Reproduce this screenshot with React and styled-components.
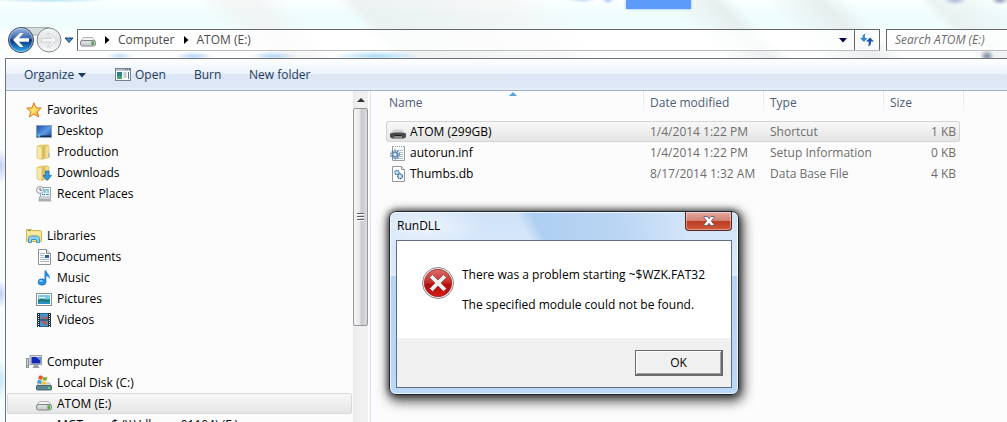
import React from "react";
import styled, { createGlobalStyle } from "styled-components";

const GlobalStyle = createGlobalStyle`
  * {
    box-sizing: border-box;
  }
  body {
    margin: 0;
    font-family: "Open Sans", "Noto Sans", sans-serif;
    font-size: 12px;
    line-height: 16px;
    color: #000;
  }
  button, input {
    font: inherit;
    color: inherit;
    margin: 0;
  }
  svg {
    display: block;
    flex: none;
  }
`;

// Icons

const BackIcon = () => (
  <svg width="56" height="28" viewBox="0 0 56 28">
    <defs>
      <linearGradient id="back" x1="0" y1="0" x2="0" y2="1">
        <stop offset="0" stopColor="#9db8dd" />
        <stop offset=".45" stopColor="#3563ad" />
        <stop offset=".5" stopColor="#0b2f7c" />
        <stop offset="1" stopColor="#2fb4f2" />
      </linearGradient>
      <linearGradient id="fwd" x1="0" y1="0" x2="0" y2="1">
        <stop offset="0" stopColor="#f6f7f7" />
        <stop offset=".5" stopColor="#dfe2e3" />
        <stop offset="1" stopColor="#fbfcfc" />
      </linearGradient>
    </defs>
    <path d="M14 1.500h28L36 9H22z" fill="#d5dcdc" stroke="#a9b0b2" />
    <circle cx="14" cy="14" r="12.500" fill="url(#back)" stroke="#3d4a66" />
    <circle cx="14" cy="14" r="11.500" fill="none" stroke="#cfe1f5" strokeOpacity=".6" />
    <path d="M6 14l7-7h3.500l-4.500 5.300h10v3.400H12l4.500 5.300H13z" fill="#fff" />
    <circle cx="42" cy="14" r="12" fill="url(#fwd)" stroke="#82898c" />
    <path d="M49.500 14L43 7.500h-3l4.500 5H34.500v3.500h10l-4.500 5h3z" fill="#f4f5f5" stroke="#c6cacc" strokeWidth=".8" />
  </svg>
);

const Triangle = ({ dir = "down", size = 8, color = "#000", stroke }) => {
  const d = { down: "M0 2h8L4 6.500z", right: "M2 0l4.500 4L2 8z", up: "M0 6h8L4 2z" }[dir];
  return (
    <svg width={size} height={size} viewBox="0 0 8 8" overflow="visible">
      <path d={d} fill={color} stroke={stroke} />
    </svg>
  );
};

const DriveIcon = () => (
  <svg width="16" height="16" viewBox="0 0 16 16">
    <path d="M3.500 5.500h9l3 4H.5z" fill="#f4f4f4" stroke="#b0b0b0" />
    <rect x=".5" y="8.500" width="15" height="5.500" rx="2" fill="#cfd0d2" stroke="#808386" />
    <path d="M2 10h8" stroke="#eee" />
    <path d="M11.500 9.500H14v3.500h-2.500z" fill="#4bab3b" />
  </svg>
);

const DarkDriveIcon = () => (
  <svg width="16" height="16" viewBox="0 0 16 16">
    <path d="M4 5.500h8l4 4H0z" fill="#d2d2d2" />
    <path d="M0 9.500C2 8 14 8 16 9.500V13l-2 1.500H2L0 13z" fill="#4a4a4a" />
    <path d="M3.500 14.500l1-3h7l1 3z" fill="#8b8b8b" />
    <path d="M4.500 11.500h7" stroke="#1f1f1f" />
  </svg>
);

const RefreshIcon = () => (
  <svg width="16" height="14" viewBox="0 0 16 14">
    <path d="M6.500.5C4 1 3.300 3 3.500 5H1l4 4 3.500-4H6C5.500 3 6 1.500 6.500.5z" fill="#2f86cf" />
    <path d="M9 13.500c2.500-.5 3.300-2.500 3-5H15l-4-4-4 4h2.500c.5 2 .2 4-.5 5z" fill="#1d56a8" />
  </svg>
);

const OpenIcon = () => (
  <svg width="16" height="14" viewBox="0 0 16 14">
    <rect x=".5" y=".5" width="15" height="12" fill="#fff" stroke="#77818c" />
    <path d="M1 2h14" stroke="#b8c2cc" strokeWidth="2" />
    <path d="M2 4h5v7H2z" fill="#2c7f8d" />
    <path d="M2 8h5v3H2z" fill="#45a36a" />
    <path d="M8.500 5h3M8.500 7h3M8.500 9h3" stroke="#8995a1" />
    <path d="M13.500 4v7" stroke="#52759c" />
    <path d="M10 1.500h1m1 0h1m1 0h1" stroke="#4672a8" />
  </svg>
);

const StarIcon = () => (
  <svg width="16" height="16" viewBox="0 0 16 16">
    <defs>
      <linearGradient id="star" x1="0" y1="0" x2="1" y2="1">
        <stop offset="0" stopColor="#f6a72a" />
        <stop offset=".5" stopColor="#ffe673" />
        <stop offset="1" stopColor="#f08a12" />
      </linearGradient>
    </defs>
    <path d="M8 .8l2 5 5.300.3-4.100 3.500 1.500 5.400L8 12l-4.700 3 1.500-5.400L.7 6.100 6 5.800z" fill="url(#star)" stroke="#df7a17" />
  </svg>
);

const DesktopIcon = () => (
  <svg width="16" height="16" viewBox="0 0 16 16">
    <defs>
      <linearGradient id="desk" x1="0" y1="0" x2="1" y2="1">
        <stop offset="0" stopColor="#1b4ca7" />
        <stop offset=".55" stopColor="#5e9be5" />
        <stop offset="1" stopColor="#183f8d" />
      </linearGradient>
    </defs>
    <rect x=".5" y="2.500" width="15" height="12" fill="url(#desk)" stroke="#8ba0bd" />
    <path d="M1 12.500h14V14H1z" fill="#182f56" />
    <circle cx="3" cy="12.500" r="1.500" fill="#4fc3e8" />
  </svg>
);

const FolderIcon = ({ download }) => (
  <svg width="16" height="16" viewBox="0 0 16 16">
    <path d="M1 2l4-1.500h7V14l-5 1.500L1 14z" fill="#e9cf74" />
    <path d="M1 2l5 1v12.500L1 14z" fill="#f7e9a7" stroke="#d9bb5c" strokeWidth=".6" />
    <path d="M6 3l3-2v13l-3 1.500z" fill="#dcbc5c" />
    <path d="M9 1.500h4V14H9z" fill="#f3df92" stroke="#d6b862" strokeWidth=".6" />
    {download ? (
      <path d="M9.500 6h3.500v4.500h2.500L11.200 15.500 7 10.500h2.500z" fill="#2a9be8" stroke="#156bb4" strokeWidth=".8" />
    ) : (
      <path d="M13 9v4" stroke="#6cb6c6" />
    )}
  </svg>
);

const RecentIcon = () => (
  <svg width="16" height="16" viewBox="0 0 16 16">
    <rect x="4.500" y="1.500" width="10" height="10" fill="#eef5f9" stroke="#9aa8b1" />
    <path d="M8 4h5M8 6h2m1 0h2M6 8.500h3m1 0h3" stroke="#3998b3" />
    <path d="M3 10.500h11l1.500 5h-13z" fill="#a9b0b5" />
    <path d="M4 12h10" stroke="#eef0f1" />
    <circle cx="4" cy="4" r="3.500" fill="#f5f7f8" stroke="#8d989f" />
    <path d="M4 2v2.200h1.800" stroke="#4b5a66" fill="none" />
  </svg>
);

const LibraryIcon = () => (
  <svg width="16" height="16" viewBox="0 0 16 16">
    <path d="M.5 3V1.500h5l1 1h8l1 1v10H.5z" fill="#f6e08c" stroke="#d2b559" />
    <path d="M2 2.500h3" stroke="#57ad4e" />
    <path d="M1 5h14" stroke="#fff5c4" />
    <path d="M2.500 14.500v-4c0-2 1.500-2.500 5.500-2.500s5.500.5 5.500 2.500v4h-3v-3h-5v3z" fill="#8fd0f1" stroke="#3f98cb" />
  </svg>
);

const DocumentIcon = () => (
  <svg width="16" height="16" viewBox="0 0 16 16">
    <path d="M2.500.5h8l4 4v11h-12z" fill="#fdfdfd" stroke="#8b9298" />
    <path d="M10.500.5v4h4" fill="#dbe0e4" stroke="#8b9298" />
    <path d="M4 4.500h5M4 6.500h4M4 8.500h4M4 10.500h9M4 12.500h9" stroke="#a8bacd" />
    <path d="M9 6h4v3H9z" fill="#285f9e" />
  </svg>
);

const MusicIcon = () => (
  <svg width="16" height="16" viewBox="0 0 16 16">
    <path d="M8.500.5h1.800c.4 3 4.200 4 3.600 9-.8-2.500-2-3-3.600-3.200V12H8.500z" fill="#2a8ad8" />
    <ellipse cx="6" cy="12" rx="4" ry="3.200" fill="#2790e0" stroke="#1868b2" strokeWidth=".6" />
    <ellipse cx="5" cy="11" rx="1.800" ry="1" fill="#8fd0fa" />
  </svg>
);

const PictureIcon = () => (
  <svg width="16" height="16" viewBox="0 0 16 16">
    <rect x=".5" y="2.500" width="15" height="12" fill="#fff" stroke="#888f96" />
    <path d="M2 4h12v9H2z" fill="#7cc7ef" />
    <path d="M2 9c3-2 6 0 12-.8V12H2z" fill="#1b7a68" />
    <path d="M2 11c4-1 8 0 12-.5V13H2z" fill="#2b8fc9" />
    <path d="M3 6.500h6" stroke="#fff" />
  </svg>
);

const VideoIcon = () => (
  <svg width="16" height="16" viewBox="0 0 16 16">
    <path d="M1 1h14v14H1z" fill="#26333e" />
    <path d="M4 1.500h8v6H4zM4 8.500h8v6H4z" fill="#4596d8" />
    <path d="M5 3l3 3 4-2v3H6zM5 9h4l3 3-3 1-2-2z" fill="#bc5945" />
    <path d="M2.500 2v13M13.500 2v13" stroke="#e4e8ec" strokeDasharray="1 1" />
  </svg>
);

const ComputerIcon = () => (
  <svg width="16" height="16" viewBox="0 0 16 16">
    <rect x=".5" y="4.500" width="2" height="9" fill="#d3d7da" stroke="#8d9499" />
    <path d="M1 11h1v1H1z" fill="#4bb64b" />
    <rect x="4" y="1.500" width="11.500" height="9" fill="#dadddf" stroke="#9aa0a6" />
    <path d="M5.500 3h9v6.500h-9z" fill="#1228b4" />
    <path d="M10 3h4.500v4z" fill="#6b8df0" />
    <path d="M8 11h4l1.500 3h-7z" fill="#989ea4" />
  </svg>
);

const DiskIcon = () => (
  <svg width="16" height="16" viewBox="0 0 16 16">
    <path d="M2.500 8h11l2 3H.5z" fill="#d4e3ea" stroke="#82949d" strokeWidth=".6" />
    <rect x=".5" y="10.500" width="15" height="4.500" rx="1" fill="#5a8593" stroke="#4d6570" />
    <path d="M12 12h2v2h-2z" fill="#67d457" />
    <path d="M3 1c2-1 3 0 4 .6L6 5c-1.500-1-2.500-1-4-.4z" fill="#e8572a" />
    <path d="M7.500 1.800c1.500.8 2.500.6 4 0l-1 3.500c-1.500.7-2.500.5-4-.2z" fill="#72b52c" />
    <path d="M1.800 5.400c1.500-.6 2.500-.5 4 .4l-1 3.200c-1.500-.8-2.500-.8-4-.2z" fill="#3d9be0" />
    <path d="M6.300 6c1.500.8 2.500.8 4 .2l-1 3.200c-1.500.6-2.500.6-4-.3z" fill="#f9c826" />
  </svg>
);

const InfIcon = () => (
  <svg width="16" height="16" viewBox="0 0 16 16">
    <path d="M2.500 1.500h12v14h-12z" fill="#f8fafb" stroke="#979fa6" />
    <path d="M4 1.500h10" stroke="#fff" strokeDasharray="1 1" />
    <path d="M8 5.500h5M9 7.500h4M9 9.500h4M8 11.500h5M5 13.500h8" stroke="#b5c4d3" />
    <circle cx="5" cy="9.500" r="4.200" fill="none" stroke="#5c82a6" strokeWidth="1.500" strokeDasharray="1.600 1.050" />
    <circle cx="5" cy="9.500" r="2.500" fill="#dceaf4" stroke="#6488aa" strokeWidth="1.600" />
  </svg>
);

const DbIcon = () => (
  <svg width="16" height="16" viewBox="0 0 16 16">
    <path d="M2.500.5h9l3 3v12h-12z" fill="#fff" stroke="#92989d" />
    <path d="M11.500.5v3h3" fill="#e6e9eb" stroke="#92989d" />
    <circle cx="7" cy="6.500" r="2.200" fill="#c8e1f2" stroke="#39709f" strokeWidth="1.200" strokeDasharray="1.400 .6" />
    <circle cx="10" cy="10.300" r="2.400" fill="#c8e1f2" stroke="#285f94" strokeWidth="1.200" strokeDasharray="1.400 .6" />
  </svg>
);

const ErrorIcon = () => (
  <svg width="32" height="32" viewBox="0 0 32 32">
    <defs>
      <linearGradient id="err" x1="0" y1="0" x2="0" y2="1">
        <stop offset="0" stopColor="#df6d69" />
        <stop offset=".5" stopColor="#c22a26" />
        <stop offset=".55" stopColor="#b00d0c" />
        <stop offset="1" stopColor="#d61a17" />
      </linearGradient>
    </defs>
    <circle cx="16" cy="16" r="15.500" fill="#f2f2f2" stroke="#8c8c8c" />
    <circle cx="16" cy="16" r="13.700" fill="url(#err)" stroke="#9d2925" strokeWidth=".8" />
    <path d="M10.500 7.500L16 13l5.500-5.500 3 3L19 16l5.500 5.500-3 3L16 19l-5.500 5.500-3-3L13 16l-5.500-5.500z" fill="#efefef" stroke="#a5342f" strokeWidth=".7" />
  </svg>
);

const CloseIcon = () => (
  <svg width="12" height="10" viewBox="0 0 12 10">
    <path d="M1 .5h3.200L6 2.700 7.800.5H11v1L8.300 5 11 8.500v1H7.800L6 7.300 4.200 9.500H1v-1L3.700 5 1 1.500z" fill="#fff" stroke="#5a5c70" strokeWidth=".9" />
  </svg>
);

// Data

const places = [
  {
    name: "Favorites",
    icon: <StarIcon />,
    items: [
      { name: "Desktop", icon: <DesktopIcon /> },
      { name: "Production", icon: <FolderIcon /> },
      { name: "Downloads", icon: <FolderIcon download /> },
      { name: "Recent Places", icon: <RecentIcon /> },
    ],
  },
  {
    name: "Libraries",
    icon: <LibraryIcon />,
    items: [
      { name: "Documents", icon: <DocumentIcon /> },
      { name: "Music", icon: <MusicIcon /> },
      { name: "Pictures", icon: <PictureIcon /> },
      { name: "Videos", icon: <VideoIcon /> },
    ],
  },
  {
    name: "Computer",
    icon: <ComputerIcon />,
    items: [
      { name: "Local Disk (C:)", icon: <DiskIcon /> },
      { name: "ATOM (E:)", icon: <DriveIcon />, selected: true },
      { name: "MGTemp $ (\\\\Vdhome01104) (F:)", icon: <DriveIcon /> },
    ],
  },
];

const files = [
  { name: "ATOM (299GB)", icon: <DarkDriveIcon />, date: "1/4/2014 1:22 PM", type: "Shortcut", size: "1 KB", selected: true },
  { name: "autorun.inf", icon: <InfIcon />, date: "1/4/2014 1:22 PM", type: "Setup Information", size: "0 KB" },
  { name: "Thumbs.db", icon: <DbIcon />, date: "8/17/2014 1:32 AM", type: "Data Base File", size: "4 KB" },
];

export default function App() {
  return (
    <>
      <GlobalStyle />
      <Desktop>
        <NavBar>
          <History aria-label="Back and forward">
            <BackIcon />
            <Triangle color="#3d8fd0" stroke="#1d3c6b" />
          </History>
          <Address>
            <DriveIcon />
            <Triangle dir="right" />
            <Crumb>Computer</Crumb>
            <Triangle dir="right" />
            <Crumb>ATOM (E:)</Crumb>
            <Spacer />
            <Triangle color="#00004d" />
            <Refresh aria-label="Refresh">
              <RefreshIcon />
            </Refresh>
          </Address>
          <Search aria-label="Search" placeholder="Search ATOM (E:)" />
        </NavBar>
        <Explorer>
          <Toolbar>
            <Tool $width={91}>
              Organize <Triangle color="#1e395b" />
            </Tool>
            <Tool $width={79}>
              <OpenIcon /> Open
            </Tool>
            <Tool $width={55}>Burn</Tool>
            <Tool>New folder</Tool>
          </Toolbar>
          <Content>
            <Sidebar>
              {places.map((group) => (
                <Group key={group.name}>
                  <Place $root>
                    {group.icon}
                    {group.name}
                  </Place>
                  {group.items.map((item) => (
                    <Place key={item.name} $selected={item.selected}>
                      {item.icon}
                      {item.name}
                    </Place>
                  ))}
                </Group>
              ))}
            </Sidebar>
            <Scrollbar>
              <ScrollUp aria-label="Scroll up">
                <Triangle dir="up" color="#333" />
              </ScrollUp>
              <Thumb>
                <Grip />
              </Thumb>
            </Scrollbar>
            <Main>
              <FileTable>
                <colgroup>
                  <col width="258" />
                  <col width="120" />
                  <col width="120" />
                  <col width="76" />
                  <col width="4" />
                </colgroup>
                <thead>
                  <tr>
                    <HeadCell>
                      Name
                      <SortMark>
                        <Triangle dir="up" color="#5aa5d6" />
                      </SortMark>
                    </HeadCell>
                    <HeadCell>Date modified</HeadCell>
                    <HeadCell>Type</HeadCell>
                    <HeadCell colSpan={2}>Size</HeadCell>
                  </tr>
                </thead>
                <tbody>
                  {files.map((file) => (
                    <FileRow key={file.name} $selected={file.selected}>
                      <td>
                        <FileName>
                          {file.icon}
                          {file.name}
                        </FileName>
                      </td>
                      <td>{file.date}</td>
                      <td>{file.type}</td>
                      <td>{file.size}</td>
                    </FileRow>
                  ))}
                </tbody>
              </FileTable>
            </Main>
          </Content>
        </Explorer>
        <Dialog role="dialog" aria-labelledby="dialog-title">
          <TitleBar>
            <Title id="dialog-title">RunDLL</Title>
            <CloseButton aria-label="Close">
              <CloseIcon />
            </CloseButton>
          </TitleBar>
          <DialogBody>
            <Message>
              <ErrorIcon />
              <div>
                <p>There was a problem starting ~$WZK.FAT32</p>
                <p>The specified module could not be found.</p>
              </div>
            </Message>
            <DialogFooter>
              <OkButton>OK</OkButton>
            </DialogFooter>
          </DialogBody>
        </Dialog>
      </Desktop>
    </>
  );
}

const Desktop = styled.div`
  position: relative;
  height: 100vh;
  display: flex;
  flex-direction: column;
  overflow: hidden;
  background:
    radial-gradient(ellipse 7px 6px at 987px 56px, #7787a0, transparent),
    radial-gradient(ellipse 44px 5px at 377px 56px, #a9dcf4, transparent),
    radial-gradient(ellipse 24px 4px at 274px 56px, #b5d6f7, transparent),
    radial-gradient(ellipse 20px 4px at 194px 56px, #b5d6f7, transparent),
    radial-gradient(ellipse 14px 4px at 120px 56px, #c2e2f7, transparent),
    radial-gradient(ellipse 9px 5px at 1000px 0, #8d9bb0, transparent),
    radial-gradient(ellipse 12px 5px at 955px 0, #a9b8d6, transparent),
    radial-gradient(ellipse 6px 4px at 608px 0, #a5c4fa, transparent),
    radial-gradient(ellipse 14px 3px at 582px 0, #c3dcfb, transparent),
    radial-gradient(ellipse 60px 3px at 50px 0, #b9e3f2, transparent),
    radial-gradient(ellipse 10px 18px at 0 166px, #c3cdf5, transparent),
    radial-gradient(ellipse 8px 14px at 0 294px, #bccdf5, transparent),
    radial-gradient(ellipse 8px 20px at 0 380px, #c4e6fa, transparent),
    linear-gradient(45deg, transparent 180px, rgba(240, 240, 240, 0.6) 200px 220px, transparent 240px 278px, rgba(232, 236, 236, 0.7) 290px, rgba(244, 244, 244, 0.6) 400px, transparent 430px 510px, rgba(228, 234, 234, 0.8) 545px, transparent 560px 580px, rgba(228, 234, 234, 0.8) 620px, transparent 640px 690px, rgba(232, 238, 238, 0.8) 700px, transparent) top / 100% 58px no-repeat,
    linear-gradient(#fcffff 0, #effdfd 14px, #effdfd 26px, #fff 36px, #fdfefe 58px, #f4fdfe 100%);

  &::before {
    content: "";
    position: absolute;
    top: 0;
    left: 626px;
    width: 65px;
    height: 9px;
    background: #5d9bfb;
    box-shadow: 0 0 3px #8bb9ff;
  }
`;

const NavBar = styled.header`
  display: flex;
  flex: none;
  height: 58px;
  padding: 29px 0 7px 7px;
`;

const History = styled.button`
  display: flex;
  align-items: center;
  gap: 2px;
  width: 70px;
  height: 22px;
  padding: 0;
  border: 0;
  background: none;
`;

const Address = styled.div`
  flex: 1;
  display: flex;
  align-items: center;
  gap: 7px;
  padding-left: 2px;
  border: 1px solid #666;
  border-bottom-color: #bbb;
  border-radius: 1px;
  background: rgba(255, 255, 255, 0.7);
  color: #4c4c4c;
`;

const Crumb = styled.button`
  padding: 0;
  border: 0;
  background: none;
`;

const Spacer = styled.div`
  flex: 1;
`;

const Refresh = styled.button`
  align-self: stretch;
  display: flex;
  align-items: center;
  justify-content: center;
  width: 25px;
  padding: 0;
  border: 0;
  border-left: 1px solid #666;
  background: none;
`;

const Search = styled.input`
  width: 121px;
  margin-left: 6px;
  padding: 0 8px;
  border: 1px solid #666;
  border-right: 0;
  border-bottom-color: #bbb;
  background: rgba(255, 255, 255, 0.7);
  font-style: italic;

  &::placeholder {
    color: #6d6d6d;
  }
`;

const Explorer = styled.section`
  flex: 1;
  min-height: 0;
  display: flex;
  flex-direction: column;
  margin-left: 5px;
  border: solid #707478;
  border-width: 1px 0 0 1px;
  background: #fcfcfc;
`;

const Toolbar = styled.div`
  flex: none;
  display: flex;
  height: 32px;
  padding-left: 18px;
  border-bottom: 1px solid #a0afc3;
  background: linear-gradient(#fff, #eaf2fb 15px, #dce6f4 15px, #dde7f5 28px, #e9f1fa);
  color: #1e395b;
`;

const Tool = styled.button`
  display: flex;
  align-items: center;
  gap: 4px;
  width: ${(props) => (props.$width ? `${props.$width}px` : "auto")};
  padding: 0;
  border: 0;
  background: none;
`;

const Content = styled.div`
  flex: 1;
  min-height: 0;
  display: flex;
`;

const Sidebar = styled.nav`
  width: 347px;
  padding: 8px 1px 0;
  overflow: hidden;
`;

const Group = styled.div`
  margin-bottom: 21px;
`;

const Place = styled.button`
  display: flex;
  align-items: center;
  gap: 5px;
  width: 100%;
  height: 21px;
  padding: 0 0 0 ${(props) => (props.$root ? 18 : 28)}px;
  border: 1px solid ${(props) => (props.$selected ? "#d9d9d9" : "transparent")};
  border-radius: 2px;
  background: ${(props) => (props.$selected ? "linear-gradient(#f8f8f8, #e5e5e5)" : "none")};
  white-space: nowrap;
`;

const Scrollbar = styled.div`
  width: 18px;
  padding-right: 2px;
  border-right: 1px solid #d6e5f5;
  background: linear-gradient(90deg, #e9e9e9, #f0f0f0 4px 15px, #fcfcfc 15px);
`;

const ScrollUp = styled.button`
  display: flex;
  align-items: center;
  justify-content: center;
  width: 100%;
  height: 17px;
  padding: 0;
  border: 0;
  background: none;
`;

const Thumb = styled.div`
  display: flex;
  align-items: center;
  justify-content: center;
  height: 218px;
  border: 1px solid #979797;
  border-radius: 2px;
  background: linear-gradient(90deg, #f5f5f5, #e7e7ea 45%, #c8c8cf 55%, #d9d9de);
`;

const Grip = styled.div`
  width: 7px;
  height: 8px;
  background: repeating-linear-gradient(#5d5d5d 0 1px, #fff 1px 2px, transparent 2px 3px);
`;

const Main = styled.main`
  flex: 1;
  min-width: 0;
  padding-left: 15px;
`;

const FileTable = styled.table`
  width: 578px;
  table-layout: fixed;
  border-collapse: separate;
  border-spacing: 0;
`;

const HeadCell = styled.th`
  position: relative;
  height: 30px;
  padding: 4px 6px 0;
  vertical-align: top;
  text-align: left;
  font-weight: 400;
  color: #4c607a;
  background: linear-gradient(#dbe6f3, #eef3f9 18px, transparent 24px) right / 1px 100% no-repeat;

  &:first-child {
    padding-left: 3px;
  }
`;

const SortMark = styled.span`
  position: absolute;
  top: -1px;
  left: 50%;
  margin-left: -6px;
`;

const FileRow = styled.tr`
  height: 21px;
  color: #6d6d6d;

  td {
    padding: 0 6px;
    border: solid ${(props) => (props.$selected ? "#d4d4d4" : "transparent")};
    border-width: 1px 0;
    background: ${(props) => (props.$selected ? "linear-gradient(#f8f8f8, #e5e5e5)" : "none")};
    white-space: nowrap;
  }
  td:first-child {
    padding-left: 3px;
    border-left-width: 1px;
    border-radius: 3px 0 0 3px;
    color: #000;
  }
  td:last-child {
    padding-right: 3px;
    border-right-width: 1px;
    border-radius: 0 3px 3px 0;
    text-align: right;
  }
`;

const FileName = styled.div`
  display: flex;
  align-items: center;
  gap: 4px;
`;

const Dialog = styled.div`
  position: absolute;
  top: 211px;
  left: 389px;
  width: 350px;
  padding: 0 6px 6px;
  border: 1px solid #1d2733;
  border-radius: 7px;
  background:
    radial-gradient(ellipse 60px 24px at 36px 14px, rgba(255, 255, 255, 0.6), transparent),
    linear-gradient(60deg, transparent 42%, rgba(160, 198, 238, 0.7) 46%, rgba(160, 198, 238, 0.5) 66%, transparent 84%) top / 100% 64px no-repeat,
    linear-gradient(#cfe2f8, #dcebfb 64px, #b7d3f3 64px, #bad8f8);
  box-shadow:
    inset 0 0 0 1px rgba(255, 255, 255, 0.75),
    0 0 6px 1px rgba(0, 0, 0, 0.6),
    2px 4px 12px 3px rgba(0, 0, 0, 0.6);
`;

const TitleBar = styled.div`
  display: flex;
  justify-content: space-between;
  height: 28px;
`;

const Title = styled.span`
  padding: 6px 1px;
`;

const CloseButton = styled.button`
  display: flex;
  align-items: center;
  justify-content: center;
  width: 47px;
  height: 19px;
  padding: 0;
  border: 1px solid #5b2320;
  border-top: 0;
  border-radius: 0 0 4px 4px;
  background: linear-gradient(#e5aca3, #d37f70 9px, #bb3a22 9px, #cf5a3e);
  box-shadow: inset 0 0 0 1px rgba(255, 255, 255, 0.4);
`;

const DialogBody = styled.div`
  border: 1px solid #5f6f82;
  background: #fff;
`;

const Message = styled.div`
  display: flex;
  gap: 8px;
  padding: 26px 25px 25px;

  p {
    margin: 0 0 14px;
  }
  p:last-child {
    margin: 0;
  }
`;

const DialogFooter = styled.div`
  display: flex;
  justify-content: flex-end;
  height: 49px;
  padding: 12px 8px;
  background: #f0f0f0;
`;

const OkButton = styled.button`
  width: 88px;
  height: 26px;
  padding: 0;
  border: 1px solid #696969;
  border-width: 1px 2px 2px 1px;
  background: #f0f0f0;
  box-shadow:
    inset 1px 1px 0 #fff,
    inset -1px -1px 0 #a0a0a0;
`;
